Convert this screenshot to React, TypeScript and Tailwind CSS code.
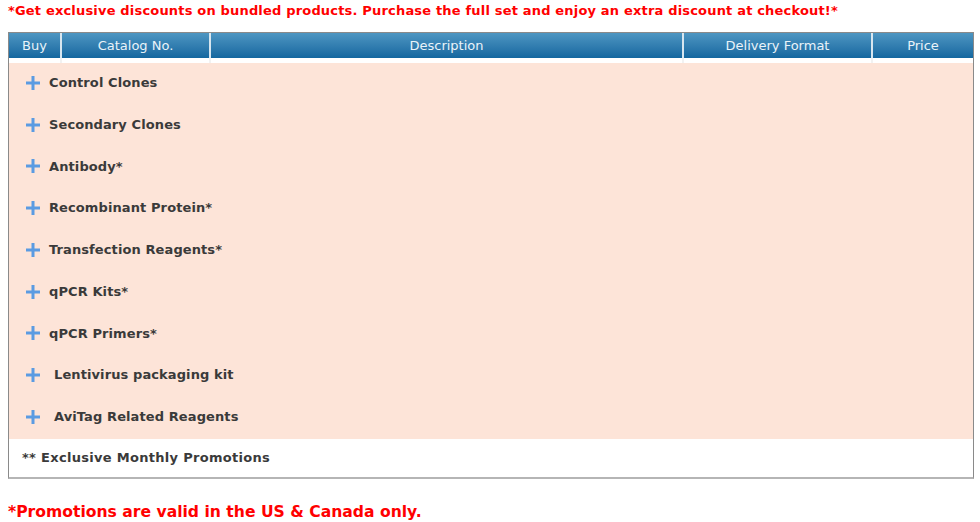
import React from 'react';

const categories = [
    { label: 'Control Clones' },
    { label: 'Secondary Clones' },
    { label: 'Antibody*' },
    { label: 'Recombinant Protein*' },
    { label: 'Transfection Reagents*' },
    { label: 'qPCR Kits*' },
    { label: 'qPCR Primers*' },
    { label: 'Lentivirus packaging kit', indent: true },
    { label: 'AviTag Related Reagents', indent: true },
];

const PlusIcon = () => (
    <svg width="14" height="14" viewBox="0 0 14 14" className="shrink-0">
        <rect x="5.5" y="0" width="3" height="14" fill="#5b9be2" />
        <rect x="0" y="5.5" width="14" height="3" fill="#5b9be2" />
    </svg>
);

const headers = [
    { label: 'Buy', w: 'w-[51px]' },
    { label: 'Catalog No.', w: 'w-[149px]' },
    { label: 'Description', w: 'w-[473px]' },
    { label: 'Delivery Format', w: 'w-[189px]' },
    { label: 'Price', w: 'flex-1' },
];

export default function App() {
    return (
        <div className="h-[522px] w-[980px] bg-white pl-2 pt-[2px] font-['DejaVu_Sans',Verdana,sans-serif]">
            <p className="text-[13px] leading-[17px] font-bold tracking-[0.18px] text-[#ff0000]">
                *Get exclusive discounts on bundled products. Purchase the full set and enjoy an extra discount at checkout!*
            </p>

            <div className="mt-[13px] w-[966px] border border-b-2 border-[#8a8a8a] border-b-[#b5b5b5]">
                <div className="flex h-[25px] bg-gradient-to-b from-[#4d96c2] to-[#13679f]">
                    {headers.map((h, i) => (
                        <div
                            key={h.label}
                            className={`${h.w} flex items-center justify-center text-[13px] text-[#eaf3f9] ${i > 0 ? 'border-l-2 border-[#d8e6ef]' : ''}`}
                        >
                            {h.label}
                        </div>
                    ))}
                </div>
                <div className="flex h-[5px] bg-white">
                    <div className="w-[51px]" />
                    <div className="w-[149px] border-l-2 border-[#f2f2f2]" />
                    <div className="w-[473px] border-l-2 border-[#f2f2f2]" />
                    <div className="w-[189px] border-l-2 border-[#f2f2f2]" />
                    <div className="flex-1 border-l-2 border-[#f2f2f2]" />
                </div>

                <div className="bg-[#fde4d8]">
                    {categories.map((c) => (
                        <div key={c.label} className="flex h-[41.75px] items-center pb-[2px] pl-[17px]">
                            <PlusIcon />
                            <span
                                className={`${c.indent ? 'ml-[14px]' : 'ml-[9px]'} text-[13px] font-bold tracking-[0.1px] text-[#3a3a3a]`}
                            >
                                {c.label}
                            </span>
                        </div>
                    ))}
                </div>
                <div className="flex h-[38px] items-center pl-[13px] text-[13px] font-bold tracking-[0.3px] text-[#3a3a3a]">
                    ** Exclusive Monthly Promotions
                </div>
            </div>

            <p className="mt-[22px] text-[15.6px] font-bold text-[#ff0000]">
                *Promotions are valid in the US &amp; Canada only.
            </p>
        </div>
    );
}
